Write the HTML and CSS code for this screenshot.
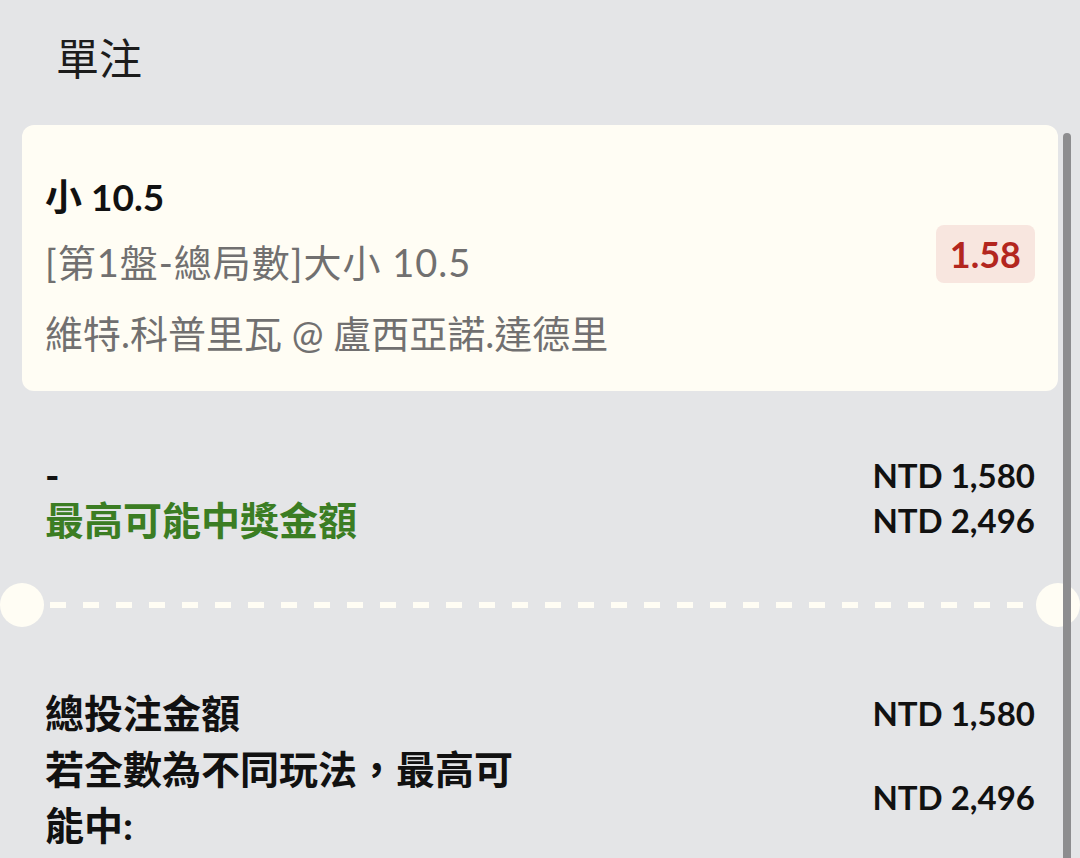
FILE: index.html
```html
<!DOCTYPE html>
<html lang="zh-Hant">
  <head>
    <meta charset="UTF-8" />
    <meta name="viewport" content="width=device-width, initial-scale=1.0" />
    <title>單注</title>
    <link rel="stylesheet" href="styles.css">
  </head>
  <body>
    <div class="betslip">
      <h1 class="slip-title">單注</h1>

      <div class="selection">
        <div class="selection-info">
          <div class="selection-name">小 10.5</div>
          <div class="selection-market">[第1盤-總局數]大小 10.5</div>
          <div class="selection-event">維特.科普里瓦 @ 盧西亞諾.達德里</div>
        </div>
        <div class="odds">1.58</div>
      </div>

      <div class="summary">
        <div class="summary-labels">
          <div>-</div>
          <div class="win-label">最高可能中獎金額</div>
        </div>
        <div class="summary-values">
          <div>NTD 1,580</div>
          <div>NTD 2,496</div>
        </div>
      </div>

      <div class="ticket-divider">
        <span class="notch"></span>
        <span class="dashes"></span>
        <span class="notch"></span>
      </div>

      <div class="totals">
        <div class="total-row">
          <div class="total-label">總投注金額</div>
          <div class="total-value">NTD 1,580</div>
        </div>
        <div class="total-row">
          <div class="total-label">若全數為不同玩法，最高可能中:</div>
          <div class="total-value">NTD 2,496</div>
        </div>
      </div>
    </div>

    <div class="scrollbar"></div>
  </body>
</html>
```

FILE: styles.css
```css
body {
  margin: 0;
  background: #e4e5e7;
  font-family: Lato, "Noto Sans CJK TC", sans-serif;
  color: #111;
  overflow: hidden;
}

.betslip {
  width: 1080px;
}

.slip-title {
  margin: 0;
  padding: 34px 56px 41px;
  font-size: 43px;
  line-height: 50px;
  font-weight: 400;
  color: #1c1c1c;
}

/* selection card */
.selection {
  display: flex;
  justify-content: space-between;
  align-items: flex-start;
  margin: 0 22px;
  padding: 48px 23px 20px;
  background: #fffdf4;
  border-radius: 12px;
}

.selection-name {
  font-size: 37px;
  line-height: 48px;
  font-weight: 700;
  margin-bottom: 8px;
}

.selection-market,
.selection-event {
  font-size: 38px;
  color: #717070;
}

.selection-market {
  line-height: 66px;
  letter-spacing: 1px;
}

.selection-event {
  line-height: 76px;
}

.odds {
  margin-top: 52px;
  padding: 0 14px;
  height: 58px;
  line-height: 58px;
  font-size: 36px;
  font-weight: 700;
  color: #b3261e;
  background: #f8e6df;
  border-radius: 8px;
}

/* potential win */
.summary {
  display: flex;
  justify-content: space-between;
  margin-top: 62px;
  padding: 0 45px;
  line-height: 45px;
  font-weight: 700;
}

.summary-labels {
  font-size: 39px;
}

.win-label {
  color: #3b7d23;
}

.summary-values {
  font-size: 33px;
  text-align: right;
}

/* dashed ticket divider */
.ticket-divider {
  display: flex;
  align-items: center;
  margin-top: 40px;
  height: 44px;
}

.notch {
  flex: none;
  width: 44px;
  height: 44px;
  border-radius: 50%;
  background: #fffdf4;
}

.dashes {
  flex: 1;
  height: 6px;
  margin: 0 6px;
  background: repeating-linear-gradient(
    to right,
    #fffdf4 0 16px,
    transparent 16px 33px
  );
}

/* totals */
.totals {
  margin-top: 58px;
  padding: 0 45px;
}

.total-row {
  display: flex;
  justify-content: space-between;
  align-items: center;
  font-weight: 700;
}

.total-label {
  width: 490px;
  font-size: 39px;
  line-height: 56px;
}

.total-value {
  font-size: 33px;
}

.scrollbar {
  position: absolute;
  top: 133px;
  left: 1063px;
  width: 8px;
  height: 760px;
  border-radius: 4px;
  background: #8d8d8f;
}
```
